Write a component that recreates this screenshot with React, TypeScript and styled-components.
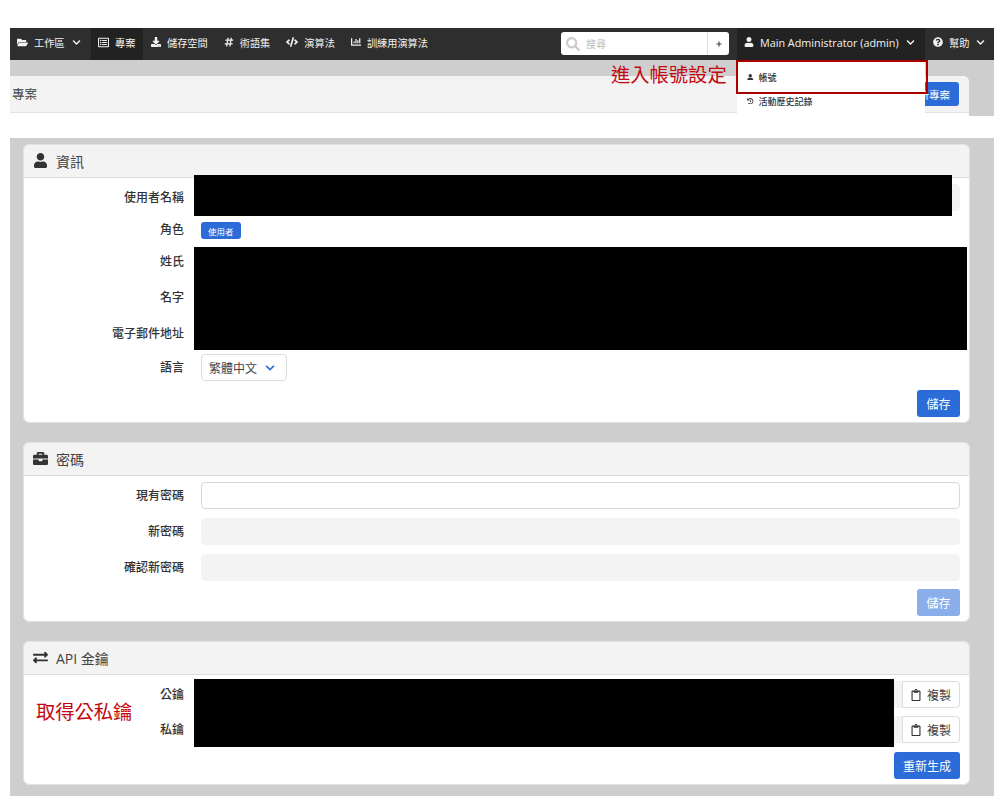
import React from "react";
import styled, { createGlobalStyle } from "styled-components";
import {
  FaBriefcase, FaChartBar, FaChevronDown, FaCode, FaDownload, FaExchangeAlt, FaFolderOpen, FaHashtag,
  FaHistory, FaPlus, FaQuestionCircle, FaRegClipboard, FaRegListAlt, FaSearch, FaUser,
} from "react-icons/fa";

const FONT = `"Open Sans", "Noto Sans CJK TC", sans-serif`;

const Global = createGlobalStyle`
  html, body { margin: 0; padding: 0; background: #fff; }
  body { font-family: ${FONT}; color: #333; }
  * { box-sizing: border-box; }
`;

const Page = styled.div`
  width: 984px;
  margin-left: 10px;
  padding: 28px 0 13px;
`;

const NavBar = styled.nav`
  display: flex;
  align-items: stretch;
  height: 32px;
  background: #2e2e2e;
  color: #f2f2f2;
  font-size: 10.2px;
`;

const NavItem = styled.div<{ $active?: boolean; $width?: number; $wide?: boolean; $tight?: boolean }>`
  display: flex;
  align-items: center;
  gap: 6px;
  padding: 0 8px 4px ${(p) => (p.$tight ? 7 : 8)}px;
  white-space: nowrap;
  background: ${(p) => (p.$active ? "#222" : "transparent")};
  ${(p) => (p.$width ? `width: ${p.$width}px; flex: none;` : "")}
  ${(p) => (p.$wide ? "font-size: 10.8px;" : "")}
  svg { flex: none; }
`;

const Chevron = styled(FaChevronDown)`
  font-size: 9px;
  margin-left: 1px;
`;

const Spacer = styled.div`
  flex: 1;
`;

const SearchGroup = styled.div`
  display: flex;
  align-self: flex-start;
  width: 168px;
  height: 23px;
  margin: 4px 8px 0 0;
  background: #fff;
  border-radius: 3px;
  overflow: hidden;
`;

const SearchField = styled.div`
  flex: 1;
  display: flex;
  align-items: center;
  gap: 6px;
  padding-left: 5px;
  color: #bbb;
  font-size: 10px;
  svg { font-size: 14px; color: #ccc; }
`;

const SearchAdd = styled.div`
  width: 22px;
  display: flex;
  align-items: center;
  justify-content: center;
  border-left: 1px solid #ddd;
  color: #444;
  font-size: 6px;
`;

const TopShot = styled.div`
  position: relative;
  height: 56px;
  padding: 16px 25px 0 0;
  background: #cecece;
  overflow: hidden;
`;

const TopPanel = styled.div`
  height: 60px;
  background: #fff;
  border-top-right-radius: 6px;
`;

const TopHeader = styled.div`
  display: flex;
  align-items: center;
  justify-content: space-between;
  height: 37px;
  padding: 0 10px 2px 2px;
  background: #f3f3f3;
  border-bottom: 1px solid #e2e2e2;
  border-top-right-radius: 6px;
  font-size: 12.5px;
  color: #444;
`;

const Button = styled.button<{ $disabled?: boolean }>`
  display: inline-flex;
  align-items: center;
  justify-content: center;
  min-width: 43px;
  height: 27px;
  padding: 0 9px;
  border: 0;
  border-radius: 3px;
  background: #2b6cd9;
  color: #fff;
  font: 12px ${FONT};
  opacity: ${(p) => (p.$disabled ? 0.55 : 1)};
`;

const NewProject = styled(Button)`
  height: 24px;
  margin-top: 2px;
  font-size: 10.5px;
  width: 64px;
  justify-content: flex-end;
`;

const Menu = styled.div`
  position: absolute;
  left: 727px;
  top: 0;
  width: 188px;
  height: 56px;
  background: #fff;
  color: #333;
  font-size: 9px;
  font-weight: 500;
`;

const MenuItem = styled.div`
  display: flex;
  align-items: center;
  gap: 5px;
  height: 24px;
  padding-left: 10px;
  svg { font-size: 6.5px; }
`;

const MenuList = styled.div`
  padding-top: 5px;
`;

const RedBox = styled.div`
  position: absolute;
  left: 726px;
  top: 0;
  width: 192px;
  height: 34px;
  border: 2px solid #ab0000;
`;

const Note = styled.div`
  position: absolute;
  color: #c4070f;
  font-size: 19.3px;
  line-height: 26px;
  white-space: nowrap;
`;

const TopNote = styled(Note)`
  left: 601px;
  top: 2px;
`;

const KeyNote = styled(Note)`
  left: 13px;
  top: 24px;
`;

const Shot = styled.div`
  display: flex;
  flex-direction: column;
  gap: 19px;
  margin-top: 22px;
  padding: 6px 24px 11px 13px;
  background: #cecece;
`;

const Card = styled.section`
  position: relative;
  background: #fff;
  border-radius: 7px;
  overflow: hidden;
  outline: 1px solid #e2e2e2;
  outline-offset: -1px;
`;

const CardHeader = styled.header`
  display: flex;
  align-items: center;
  gap: 8px;
  height: 34px;
  padding: 0 10px;
  background: #f3f3f3;
  border-bottom: 1px solid #dcdcdc;
  font-size: 14px;
  color: #444;
  svg { font-size: 15px; color: #333; flex: none; }
`;

const CardBody = styled.div<{ $top: number }>`
  position: relative;
  display: flex;
  flex-direction: column;
  padding: ${(p) => p.$top}px 10px 6px 0;
`;

const Rows = styled.div<{ $gap: number }>`
  display: flex;
  flex-direction: column;
  gap: ${(p) => p.$gap}px;
`;

const Row = styled.div`
  display: grid;
  grid-template-columns: 161px 1fr;
  column-gap: 17px;
  align-items: center;
  height: 27px;
`;

const RoleRow = styled(Row)`
  height: 19px;
`;

const LanguageRow = styled(Row)`
  margin-top: -2px;
`;

const Label = styled.label`
  position: relative;
  top: -1px;
  text-align: right;
  font-size: 12px;
  font-weight: 500;
  color: #333;
`;

const Input = styled.div<{ $disabled?: boolean }>`
  height: 27px;
  border-radius: 4px;
  background: ${(p) => (p.$disabled ? "#f3f3f3" : "#fff")};
  border: 1px solid ${(p) => (p.$disabled ? "#f3f3f3" : "#d8d8d8")};
`;

const Badge = styled.span`
  justify-self: start;
  display: inline-flex;
  align-items: center;
  height: 17px;
  margin-top: 2px;
  padding: 0 7px;
  border-radius: 3px;
  background: #2b6cd9;
  color: #fff;
  font-size: 8.5px;
`;

const Select = styled.div`
  justify-self: start;
  display: inline-flex;
  align-items: center;
  gap: 8px;
  width: 86px;
  height: 27px;
  padding: 0 7px;
  border: 1px solid #dcdcdc;
  border-radius: 4px;
  font-size: 12px;
  color: #444;
  svg { font-size: 10px; color: #2b6cd9; }
`;

const InputGroup = styled.div`
  display: flex;
  justify-content: flex-end;
  height: 27px;
  background: #f3f3f3;
  border-radius: 4px;
`;

const CopyButton = styled.div`
  display: flex;
  align-items: center;
  gap: 5px;
  width: 58px;
  padding-left: 7px;
  background: #fff;
  border: 1px solid #dcdcdc;
  border-radius: 0 4px 4px 0;
  font-size: 12px;
  color: #444;
  svg { font-size: 12px; color: #333; }
`;

const Actions = styled.div<{ $top: number }>`
  display: flex;
  justify-content: flex-end;
  margin-top: ${(p) => p.$top}px;
`;

const Redact = styled.div`
  position: absolute;
  background: #000;
`;

const RedactUser = styled(Redact)`
  left: 171px; top: -3px; width: 758px; height: 41px;
`;
const RedactNames = styled(Redact)`
  left: 171px; top: 69px; width: 773px; height: 103px;
`;
const RedactKeys = styled(Redact)`
  left: 171px; top: 4px; width: 700px; height: 68px;
`;

export default function App() {
  return (
    <Page>
      <Global />
      <NavBar>
        <NavItem $tight $width={81}><FaFolderOpen size={11} />工作區<Chevron /></NavItem>
        <NavItem $tight $active $width={52}><FaRegListAlt size={11} />專案</NavItem>
        <NavItem><FaDownload size={10} />儲存空間</NavItem>
        <NavItem><FaHashtag size={10} />術語集</NavItem>
        <NavItem><FaCode size={12} />演算法</NavItem>
        <NavItem><FaChartBar size={10} />訓練用演算法</NavItem>
        <Spacer />
        <SearchGroup>
          <SearchField><FaSearch />搜尋</SearchField>
          <SearchAdd><FaPlus /></SearchAdd>
        </SearchGroup>
        <NavItem $tight $active $wide $width={188}><FaUser size={10} />Main Administrator (admin)<Chevron /></NavItem>
        <NavItem $width={69}><FaQuestionCircle size={10} />幫助<Chevron /></NavItem>
      </NavBar>
      <TopShot>
        <TopPanel>
          <TopHeader>專案<NewProject>新專案</NewProject></TopHeader>
        </TopPanel>
        <Menu>
          <MenuList>
            <MenuItem><FaUser />帳號</MenuItem>
            <MenuItem><FaHistory />活動歷史記錄</MenuItem>
          </MenuList>
        </Menu>
        <RedBox />
        <TopNote>進入帳號設定</TopNote>
      </TopShot>
      <Shot>
        <Card>
          <CardHeader><FaUser />資訊</CardHeader>
          <CardBody $top={6}>
            <Rows $gap={9}>
              <Row><Label>使用者名稱</Label><Input $disabled /></Row>
              <RoleRow><Label>角色</Label><Badge>使用者</Badge></RoleRow>
              <Row><Label>姓氏</Label><Input /></Row>
              <Row><Label>名字</Label><Input /></Row>
              <Row><Label>電子郵件地址</Label><Input /></Row>
              <LanguageRow><Label>語言</Label><Select>繁體中文<FaChevronDown /></Select></LanguageRow>
            </Rows>
            <Actions $top={9}><Button>儲存</Button></Actions>
            <RedactUser />
            <RedactNames />
          </CardBody>
        </Card>
        <Card>
          <CardHeader><FaBriefcase />密碼</CardHeader>
          <CardBody $top={6}>
            <Rows $gap={9}>
              <Row><Label>現有密碼</Label><Input /></Row>
              <Row><Label>新密碼</Label><Input $disabled /></Row>
              <Row><Label>確認新密碼</Label><Input $disabled /></Row>
            </Rows>
            <Actions $top={8}><Button $disabled>儲存</Button></Actions>
          </CardBody>
        </Card>
        <Card>
          <CardHeader><FaExchangeAlt />API 金鑰</CardHeader>
          <CardBody $top={6}>
            <Rows $gap={8}>
              <Row><Label>公鑰</Label><InputGroup><CopyButton><FaRegClipboard />複製</CopyButton></InputGroup></Row>
              <Row><Label>私鑰</Label><InputGroup><CopyButton><FaRegClipboard />複製</CopyButton></InputGroup></Row>
            </Rows>
            <Actions $top={9}><Button>重新生成</Button></Actions>
            <RedactKeys />
            <KeyNote>取得公私鑰</KeyNote>
          </CardBody>
        </Card>
      </Shot>
    </Page>
  );
}
